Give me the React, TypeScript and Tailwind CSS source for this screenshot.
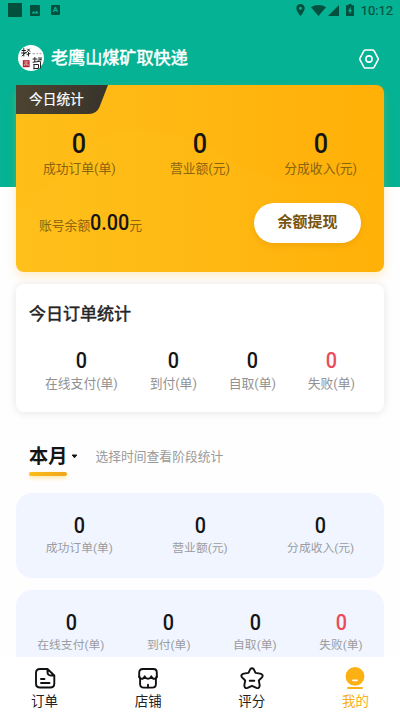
import { clsx } from "clsx";

type Stat = { label: string; value: string; danger?: boolean };

const totals: Stat[] = [
  { label: "成功订单(单)", value: "0" },
  { label: "营业额(元)", value: "0" },
  { label: "分成收入(元)", value: "0" },
];

const orders: Stat[] = [
  { label: "在线支付(单)", value: "0" },
  { label: "到付(单)", value: "0" },
  { label: "自取(单)", value: "0" },
  { label: "失败(单)", value: "0", danger: true },
];

function StatusBar() {
  return (
    <div className="flex h-5 items-center justify-between pl-2 pr-[7px] text-[#04503f]">
      <div className="flex items-center">
        <span className="h-[14px] w-[14px] bg-current" />
        <svg className="ml-2 h-[11px] w-[10px]" viewBox="0 0 10 11">
          <rect width="10" height="11" rx="1" fill="currentColor" />
          <path d="M1.500 8.500 3.500 6l1.500 1.600L6.600 5.500l2 3z" fill="#05b294" />
        </svg>
        <span className="ml-[11px] flex h-[10px] w-[9px] items-center justify-center rounded-[1px] bg-current">
          <span className="text-[8px] font-bold leading-none text-[#05b294]">A</span>
        </span>
      </div>
      <div className="flex items-center">
        <svg className="h-3 w-[9px]" viewBox="0 0 9 12">
          <path d="M4.500 0A4.200 4.200 0 0 0 .3 4.200C.3 7.400 4.500 12 4.500 12s4.200-4.600 4.200-7.800A4.200 4.200 0 0 0 4.500 0zm0 5.700a1.500 1.500 0 1 1 0-3 1.500 1.500 0 0 1 0 3z" fill="currentColor" />
        </svg>
        <svg className="ml-[6px] h-[11px] w-[15px]" viewBox="0 0 15 11">
          <path d="M7.500 11 15 2.200C12.800.700 10.200 0 7.500 0S2.200.700 0 2.200z" fill="currentColor" />
        </svg>
        <svg className="ml-[2px] h-[11px] w-[11px]" viewBox="0 0 11 11">
          <path d="M11 0v11H0z" fill="currentColor" />
        </svg>
        <svg className="ml-[7px] h-3 w-2" viewBox="0 0 8 12">
          <path d="M2.500 0h3v1.200H8V12H0V1.200h2.500z" fill="currentColor" />
          <path d="M4.600 2.800 2 7.200h1.600v3L6 5.900H4.600z" fill="#05b294" />
        </svg>
        <span className="ml-[7px] mt-px text-[13px] leading-none [-webkit-text-stroke:0.2px]">10:12</span>
      </div>
    </div>
  );
}

function Avatar() {
  return (
    <svg className="h-[26px] w-[26px]" viewBox="0 0 26 26" fill="none">
      <circle cx="13" cy="13" r="13" fill="#fff" />
      <g stroke="#222" strokeWidth="1" strokeLinecap="round">
        <path d="M4 5.500h3.500M5.800 3.500v7.500M3.500 8H8M4 11l3.500-3.500M9.500 4l2.500 2.500M11.500 4 8.500 7.500M9 9.500l3-1M10.500 7.500v3.500" />
        <path d="M15 14h4M16.800 12.500v4M20.500 13h3M20 15.200l3.500-1M15 17.300l8-1.200M16 19.500V24M16 19.500h4.500v4H16M22.500 17.500V23" />
      </g>
      <path d="M14.500 8.700h2.500M18.500 8.600h1.500M21.500 8.700h2" stroke="#888" strokeWidth=".8" />
      <rect x="4.800" y="15.200" width="6.800" height="7" fill="#b3202b" />
      <path d="M6 17h4.500M8.200 16.500v4.500M6.300 21v-2h3.800v2" stroke="#f2c9c9" strokeWidth=".7" />
    </svg>
  );
}

function Header() {
  return (
    <div className="flex h-[65px] items-center pl-[18px] pr-[21px] pt-[11px]">
      <Avatar />
      <h1 className="ml-[7px] flex-1 text-[17.100px] leading-6 text-white [-webkit-text-stroke:0.5px]">老鹰山煤矿取快递</h1>
      <svg className="mt-px h-5 w-5" viewBox="0 0 20 20" fill="none" stroke="#fff" strokeWidth="1.600">
        <path d="M6.300 1h7.400q.9 0 1.400.8l3.900 7.200q.5 1 0 2l-3.900 7.200q-.5.800-1.400.8H6.300q-.9 0-1.400-.8L1 11q-.5-1 0-2l3.900-7.200Q5.400 1 6.300 1z" />
        <circle cx="10" cy="10" r="3.100" />
      </svg>
    </div>
  );
}

function StatCell({ stat, size }: { stat: Stat; size: "lg" | "md" | "sm" }) {
  return (
    <div className="flex flex-col items-center whitespace-nowrap">
      <span
        className={clsx(
          "scale-x-90 font-medium",
          size === "lg" ? "text-[28px] leading-7" : "text-[22px] leading-[22px]",
          stat.danger ? "text-[#ee4a5c]" : "text-[#151515]",
        )}
      >
        {stat.value}
      </span>
      <span
        className={clsx(
          size === "lg" && "mt-px text-[12.800px] leading-5 text-[#8a6410]",
          size === "md" && "mt-[2px] text-[12.800px] leading-5 text-[#929292]",
          size === "sm" && "mt-px text-[11.800px] leading-5 text-[#9a9ca1]",
        )}
      >
        {stat.label}
      </span>
    </div>
  );
}

function BalanceCard() {
  return (
    <section className="relative h-[187px] overflow-hidden rounded-lg rounded-tl-none bg-linear-to-r from-[#ffc01b] to-[#ffb107]">
      <svg className="absolute inset-0 h-full w-full" viewBox="0 0 368 187">
        <path d="M0 0H368V79C330 108 268 104 218 78 168 42 92 22 46 90L0 124z" fill="#fda900" opacity=".08" />
      </svg>
      <div className="relative flex h-[29px] w-[92px] items-center pb-px pl-[13px]">
        <svg className="absolute inset-0" width="92" height="29" viewBox="0 0 92 29">
          <defs>
            <linearGradient id="tag" x1="0" x2="1" y1="0" y2="0">
              <stop offset="0" stopColor="#4d4330" />
              <stop offset="1" stopColor="#38342c" />
            </linearGradient>
          </defs>
          <path d="M0 0H92L83.500 22Q80.500 29 73 29H0z" fill="url(#tag)" />
        </svg>
        <span className="relative text-[13.700px] leading-5 text-white [-webkit-text-stroke:0.2px]">今日统计</span>
      </div>
      <div className="relative mt-4 grid grid-cols-3 px-[3px]">
        {totals.map((stat) => (
          <StatCell key={stat.label} stat={stat} size="lg" />
        ))}
      </div>
      <div className="relative mt-6 flex items-center justify-between pl-[23px] pr-[23px]">
        <div className="flex items-baseline text-[12.800px] text-[#8a6410]">
          <span>账号余额</span>
          <span className="w-[39px] text-[22px] font-medium leading-6 text-[#151515]">
            <span className="inline-block origin-left scale-x-[0.9]">0.00</span>
          </span>
          <span>元</span>
        </div>
        <button className="h-10 w-[107px] rounded-full bg-white pb-[2px] text-[15px] font-bold text-[#775410] shadow-[0_3px_6px_rgba(190,120,0,0.22)]">
          余额提现
        </button>
      </div>
    </section>
  );
}

function TodayCard() {
  return (
    <section className="mt-3 h-32 rounded-lg bg-white pt-[18px] shadow-[0_1px_8px_rgba(0,0,0,0.1)]">
      <h2 className="pl-[13px] text-[17px] leading-6 text-[#242424] [-webkit-text-stroke:0.5px]">今日订单统计</h2>
      <div className="mt-6 flex justify-between px-[29px]">
        {orders.map((stat) => (
          <StatCell key={stat.label} stat={stat} size="md" />
        ))}
      </div>
    </section>
  );
}

function PeriodPicker() {
  return (
    <div className="flex h-[81px] items-start pl-[13px] pt-[32px]">
      <div>
        <div className="text-[19.200px] font-bold leading-[26px] text-[#151515]">本月</div>
        <div className="mt-[2px] h-1 w-[38px] rounded-full bg-linear-to-r from-[#fdbc16] to-[#eda61b] shadow-[0_2px_4px_rgba(255,185,20,0.4)]" />
      </div>
      <svg className="ml-[4px] mt-[10px] h-[5px] w-[7px]" viewBox="0 0 7 5">
        <path d="M1.200 1h4.600L3.500 3.800z" fill="#151515" stroke="#151515" strokeLinejoin="round" />
      </svg>
      <span className="ml-[17px] mt-[3px] text-[12.800px] leading-5 text-[#9a9a9a]">选择时间查看阶段统计</span>
    </div>
  );
}

const tabs = [
  {
    label: "订单",
    icon: (
      <>
        <path d="M13.500 2H6Q2 2 2 6v10.500q0 4 4 4h10.300q4 0 4-4V8.500zM13.500 2v3q0 3.500 3.500 3.500h3.300" />
        <path d="M7 12h3.500M7 16h8.500" />
      </>
    ),
  },
  {
    label: "店铺",
    icon: (
      <>
        <path d="M5.700 2h10.600q3.500 0 3.500 3.500v4L18.900 11.500v5.500q0 3.600-3.600 3.600H6.700q-3.600 0-3.600-3.600V11.500L2.200 9.500v-4Q2.200 2 5.700 2z" />
        <path d="M2.200 9.500q.6 2.300 2.500 2.300 2 0 3-2.500 1.200 2.500 3.300 2.500t3.300-2.500q1 2.500 3 2.500 2 0 2.500-2.300M11 17.800v2.500" />
      </>
    ),
  },
  {
    label: "评分",
    icon: (
      <>
        <path d="M9.300 2.200q1.700-2 3.400 0l1.800 3.700 4.800.7q3.300.9 1.900 3.500l-3.400 3.400.9 4.900q-.2 3.400-3.300 2.500L11 18.800l-4.400 2.100q-3.100.9-3.300-2.500l.9-4.900L.8 10.100Q-.6 7.500 2.700 6.600l4.800-.7z" />
        <path d="M8.700 13.800h4.600" />
      </>
    ),
  },
];

function TabBar() {
  return (
    <nav className="flex h-[55px] justify-between bg-white px-[31px] pt-[10px] text-[13.500px] text-[#222]">
      {tabs.map((tab) => (
        <div key={tab.label} className="flex w-[27px] flex-col items-center">
          <svg className="h-[22px] w-[22px] shrink-0 overflow-visible" viewBox="0 0 22 22" fill="none" stroke="#111" strokeWidth="1.900" strokeLinecap="round" strokeLinejoin="round">
            {tab.icon}
          </svg>
          <span className="mt-[2px] leading-5 whitespace-nowrap">{tab.label}</span>
        </div>
      ))}
      <div className="flex w-[27px] flex-col items-center text-[#f8b014]">
        <svg className="h-[22px] w-[22px] shrink-0" viewBox="0 0 22 22">
          <circle cx="11" cy="9.400" r="9.400" fill="#fbb114" />
          <path d="M9 13.300h4" stroke="#fff" strokeWidth="1.800" strokeLinecap="round" />
          <path d="M4 21h14" stroke="#fbb114" strokeWidth="1.800" strokeLinecap="round" />
        </svg>
        <span className="mt-[2px] leading-5 whitespace-nowrap">我的</span>
      </div>
    </nav>
  );
}

export default function App() {
  return (
    <div className="flex h-[712px] w-[400px] flex-col overflow-hidden bg-[#fefefe] font-[Roboto,'Noto_Sans_CJK_SC',sans-serif]">
      <main className="h-[657px] overflow-hidden bg-[linear-gradient(#05b294_187px,transparent_187px)]">
        <StatusBar />
        <Header />
        <div className="px-4">
          <div className="rounded-lg shadow-[0_4px_10px_rgba(255,185,30,0.25)]">
            <BalanceCard />
          </div>
          <TodayCard />
          <PeriodPicker />
          <section className="grid h-[85px] grid-cols-3 rounded-2xl bg-[#f1f5ff] px-[3px] pt-[22px]">
            {totals.map((stat) => (
              <StatCell key={stat.label} stat={stat} size="sm" />
            ))}
          </section>
          <section className="mt-3 flex h-[85px] justify-around rounded-2xl bg-[#f1f5ff] pt-[22px]">
            {orders.map((stat) => (
              <StatCell key={stat.label} stat={stat} size="sm" />
            ))}
          </section>
        </div>
      </main>
      <TabBar />
    </div>
  );
}
